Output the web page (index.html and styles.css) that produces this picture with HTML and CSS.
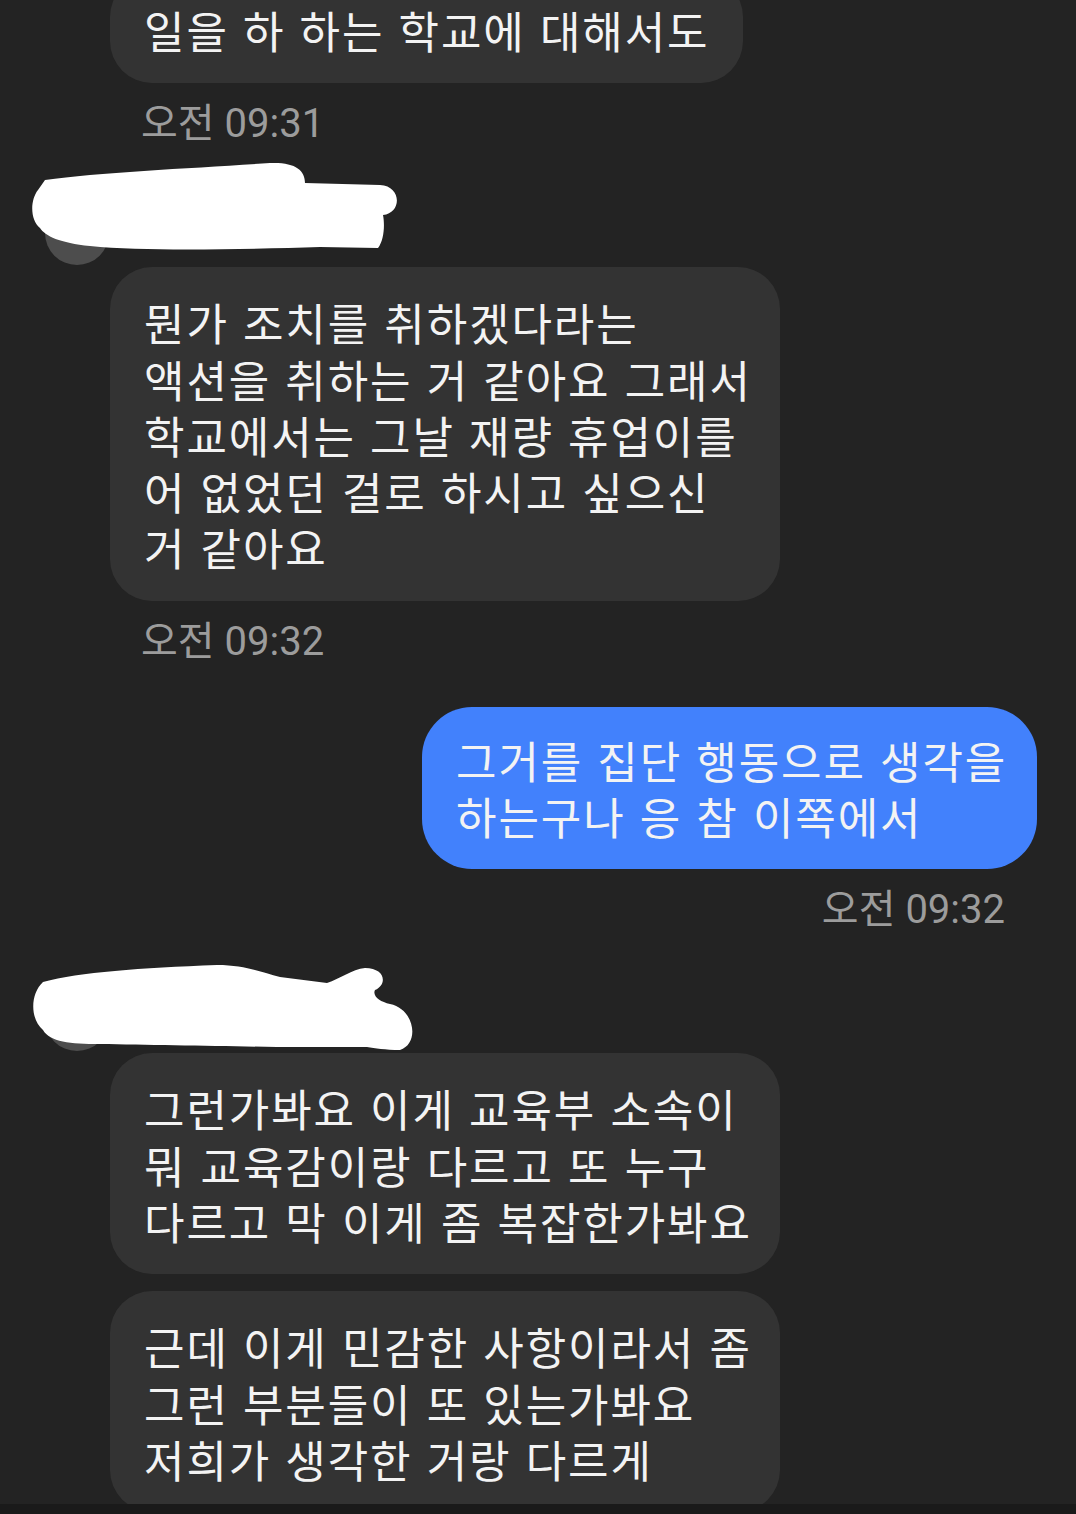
FILE: index.html
```html
<!DOCTYPE html>
<html lang="ko">
<head>
  <meta charset="UTF-8" />
  <meta name="viewport" content="width=device-width, initial-scale=1.0" />
  <title>메시지</title>
  <link rel="stylesheet" href="styles.css">
</head>
<body>
  <div class="chat">
    <div class="bubble in first">일을 하 하는 학교에 대해서도</div>
    <div class="time">오전 09:31</div>

    <div class="sender">
      <div class="avatar"></div>
      <svg class="scribble" viewBox="0 0 430 119" width="430" height="119">
        <path d="M45 32 C100 24 200 20 270 15 C295 14 305 22 305 35 L380 37 C402 38 402 65 383 67 C385 77 384 92 378 100 L320 99 C250 101 150 104 90 98 C60 95 45 88 40 80 C30 72 30 52 38 42 Z" fill="#fff"/>
      </svg>
    </div>

    <div class="bubble in wide">뭔가 조치를 취하겠다라는<br>액션을 취하는 거 같아요 그래서<br>학교에서는 그날 재량 휴업이를<br>어 없었던 걸로 하시고 싶으신<br>거 같아요</div>
    <div class="time">오전 09:32</div>

    <div class="bubble out">그거를 집단 행동으로 생각을<br>하는구나 응 참 이쪽에서</div>
    <div class="time mine">오전 09:32</div>

    <div class="sender">
      <div class="avatar"></div>
      <svg class="scribble" viewBox="0 0 430 119" width="430" height="119">
        <path d="M43 48 C80 38 140 34 217 31 C245 31 260 38 280 43 L327 49 C340 45 352 35 365 34 C385 34 388 50 375 56 C372 62 380 68 390 70 C415 75 420 110 400 116 C385 116 375 114 367 113 L277 113 C220 112 150 111 100 110 C70 110 50 108 43 96 C30 85 30 60 43 48 Z" fill="#fff"/>
      </svg>
    </div>

    <div class="bubble in wide">그런가봐요 이게 교육부 소속이<br>뭐 교육감이랑 다르고 또 누구<br>다르고 막 이게 좀 복잡한가봐요</div>
    <div class="bubble in wide next">근데 이게 민감한 사항이라서 좀<br>그런 부분들이 또 있는가봐요<br>저희가 생각한 거랑 다르게</div>
  </div>
  <div class="navbar"></div>
</body>
</html>
```

FILE: styles.css
```css
:root {
  --bg: #232323;
  --bubble: #333333;
  --blue: #4281fc;
  --time: #9c9c9c;
}
* { box-sizing: border-box; }
html, body {
  margin: 0; padding: 0;
  background-color: var(--bg);
  height: 100%;
  overflow: hidden;
}
.chat {
  display: flex; flex-direction: column;
  font-family: "Noto Sans CJK KR", sans-serif;
}
.bubble {
  font-size: 44px; line-height: 56.3px;
  letter-spacing: 1.9px;
  color: #f3f3f3;
  padding: 27px 34px 25px;
  border-radius: 42px;
  width: fit-content;
  white-space: nowrap;
}
.in {
  background: var(--bubble);
  margin-left: 110px;
}
.wide { width: 670px; }
.first { margin-top: -25px; }
.next { margin-top: 17px; }
.out {
  background: var(--blue);
  align-self: flex-end;
  margin-right: 39px; margin-top: 41px;
  width: 615px;
  border-radius: 50px;
  padding-top: 25px; padding-bottom: 25px;
}
.time {
  font-family: Roboto, "Noto Sans CJK KR", sans-serif;
  font-size: 40px; line-height: 48px;
  color: var(--time);
  margin: 17px 0 0 141px;
}
.time.mine {
  align-self: flex-end;
  margin: 17px 71px 0 0;
}
.sender {
  position: relative;
  height: 119px;
  display: flex; align-items: flex-end;
  padding-left: 45px; padding-bottom: 2px;
}
.avatar {
  width: 64px; height: 64px;
  border-radius: 50%;
  background: #4d4d4d;
}
.scribble {
  position: absolute; left: 0; top: 0;
}
.navbar {
  position: fixed; left: 0; right: 0; bottom: 0;
  height: 10px;
  background: #1a1a1a;
}
```
